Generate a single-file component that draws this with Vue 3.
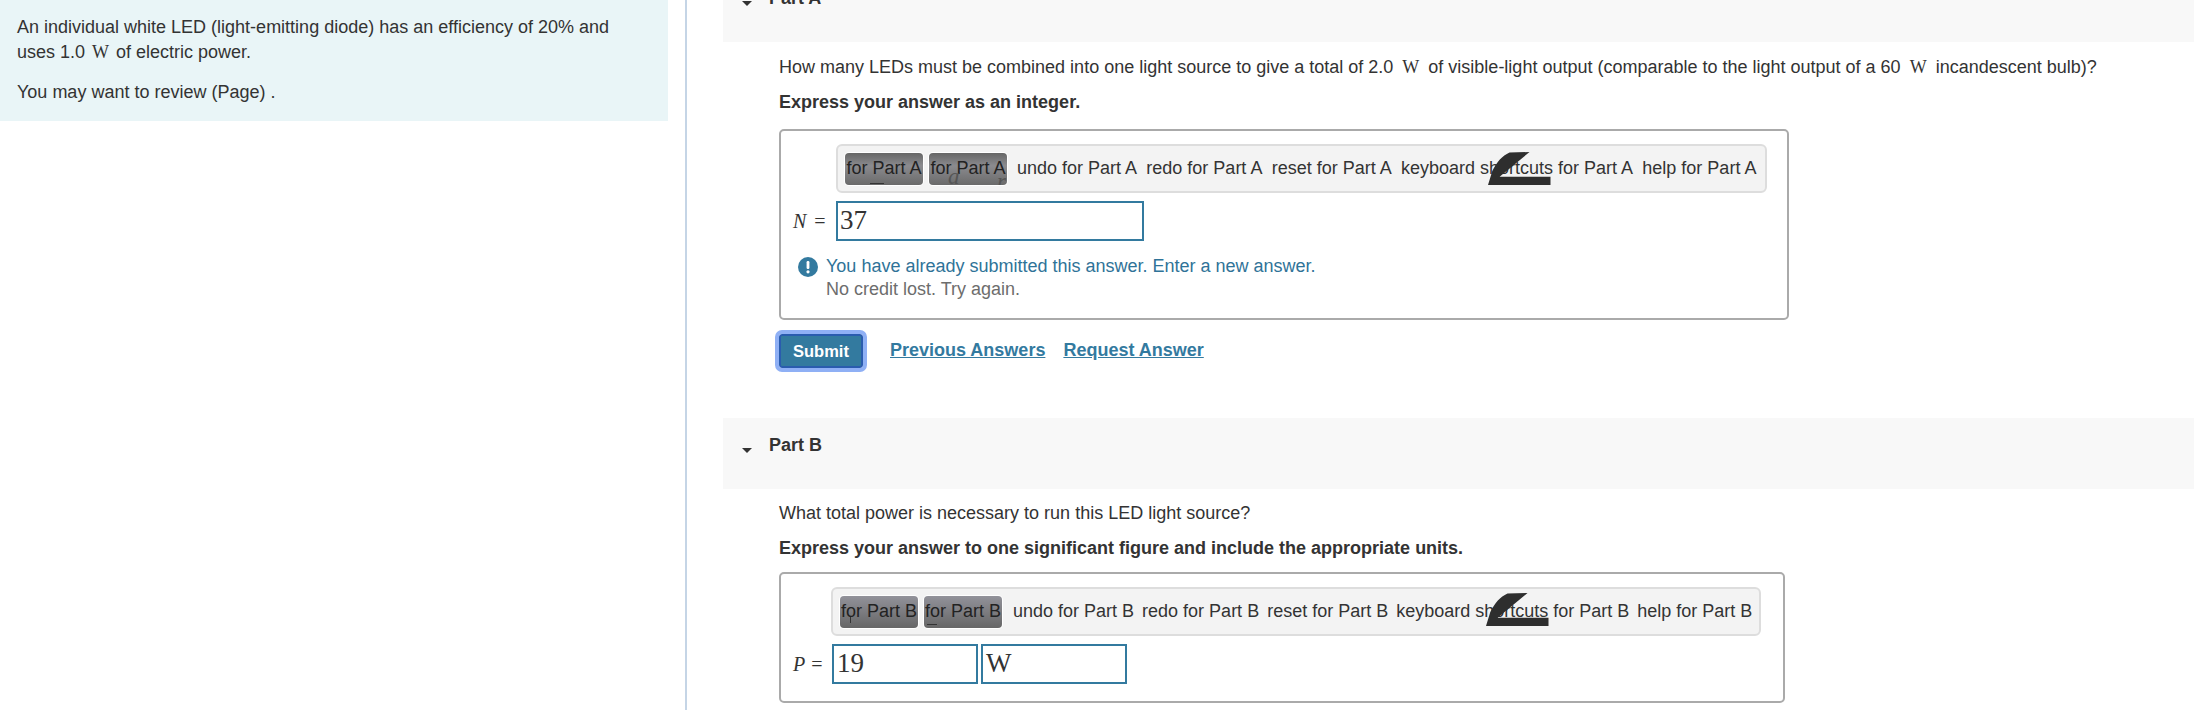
<template>
  <div class="page">
    <aside class="left">
      <div class="intro">
        <p>An individual white LED (light-emitting diode) has an efficiency of 20% and uses 1.0 <span class="unit">W</span> of electric power.</p>
        <p>You may want to review (Page) .</p>
      </div>
    </aside>

    <main class="right">
      <section v-for="part in parts" :key="part.name" class="part" :class="part.cls">
        <div class="part-head">
          <span class="caret"></span>
          <span class="part-name">Part {{ part.name }}</span>
        </div>
        <div class="part-body">
          <p class="question" v-html="part.question"></p>
          <p class="instruction">{{ part.instruction }}</p>
          <div class="answer-box">
            <div class="toolbar">
              <span class="tool-btn first">for Part {{ part.name }}<i class="mark"></i></span>
              <span class="tool-btn second">
                for Part {{ part.name }}
                <template v-if="part.name === 'A'">
                  <i class="ghost ghost-a">a</i>
                  <i class="ghost ghost-r">r</i>
                </template>
                <i v-else class="mark"></i>
              </span>
              <span v-for="t in tools" :key="t" class="tool">{{ t }} for Part {{ part.name }}</span>
              <svg class="swoosh" width="63" height="33" viewBox="0 0 63 33">
                <path d="M0 33 L4.3 19 C9 10 14 4 21.5 0.6 L41.5 0 L11.6 24.7 L62.5 24.7 L62.5 33 Z" fill="#2e2e2e" />
              </svg>
            </div>
            <div class="answer-row">
              <span class="var"><i>{{ part.variable }}</i><span class="eq">=</span></span>
              <span v-for="v in part.values" :key="v" class="field">{{ v }}</span>
            </div>
            <div v-if="part.feedback" class="feedback">
              <svg class="alert" width="20" height="20" viewBox="0 0 20 20">
                <circle cx="10" cy="10" r="10" fill="#337a9f" />
                <rect x="8.6" y="4" width="2.8" height="8" rx="1.2" fill="#fff" />
                <circle cx="10" cy="14.8" r="1.6" fill="#fff" />
              </svg>
              <div>
                <div class="feedback-main">You have already submitted this answer. Enter a new answer.</div>
                <div class="feedback-sub">No credit lost. Try again.</div>
              </div>
            </div>
          </div>
          <div v-if="part.feedback" class="actions">
            <button type="button" class="submit">Submit</button>
            <a class="link">Previous Answers</a>
            <a class="link">Request Answer</a>
          </div>
        </div>
      </section>
    </main>
  </div>
</template>

<script setup>
const tools = ['undo', 'redo', 'reset', 'keyboard shortcuts', 'help']

const parts = [
  {
    name: 'A',
    cls: 'part-a',
    question: 'How many LEDs must be combined into one light source to give a total of 2.0 <span class="unit">W</span> of visible-light output (comparable to the light output of a 60 <span class="unit">W</span> incandescent bulb)?',
    instruction: 'Express your answer as an integer.',
    variable: 'N',
    values: ['37'],
    feedback: true
  },
  {
    name: 'B',
    cls: 'part-b',
    question: 'What total power is necessary to run this LED light source?',
    instruction: 'Express your answer to one significant figure and include the appropriate units.',
    variable: 'P',
    values: ['19', 'W'],
    feedback: false
  }
]
</script>

<style>
html, body {
  margin: 0;
  overflow: hidden;
  background: #fff;
}
</style>

<style scoped>
.page {
  display: flex;
  height: 710px;
  overflow: hidden;
  font-family: "Liberation Sans", Arial, sans-serif;
  font-size: 18px;
  color: #333;
}

.left {
  width: 685px;
  flex: none;
  border-right: 2px solid #c5d5e6;
}

.intro {
  width: 668px;
  height: 121px;
  box-sizing: border-box;
  padding: 15px 17px 0;
  background: #e9f5f7;
  line-height: 25px;
}

.intro p {
  margin: 0 0 15px;
}

.intro p:last-child {
  margin: 0;
}

:deep(.unit) {
  font-family: "Liberation Serif", serif;
  margin: 0 4px;
}

.intro .unit {
  margin: 0 2px;
}

.right {
  flex: 1;
  min-width: 0;
  margin-top: -29px;
  padding-left: 36px;
}

.part-head {
  display: flex;
  align-items: center;
  height: 71px;
  padding: 0 0 17px 19px;
  box-sizing: border-box;
  background: #f8f8f8;
}

.caret {
  width: 0;
  height: 0;
  margin-top: 10px;
  border-left: 5px solid transparent;
  border-right: 5px solid transparent;
  border-top: 5px solid #333;
}

.part-name {
  margin-left: 17px;
  font-weight: bold;
}

.part-body {
  padding-left: 56px;
}

.question {
  margin: 13px 0 0;
  line-height: 24px;
}

.part-b .question {
  margin-top: 12px;
}

.instruction {
  margin: 11px 0 0;
  line-height: 24px;
  font-weight: bold;
}

.answer-box {
  box-sizing: border-box;
  margin-top: 15px;
  border: 2px solid #aaa;
  border-radius: 5px;
  background: #fff;
}

.part-a .answer-box {
  width: 1010px;
  height: 191px;
  padding: 13px 20px 0 55px;
}

.part-b .answer-box {
  width: 1006px;
  height: 131px;
  margin-top: 12px;
  padding: 13px 22px 0 50px;
}

.toolbar {
  position: relative;
  display: flex;
  align-items: center;
  height: 49px;
  box-sizing: border-box;
  padding-left: 7px;
  border: 2px solid #ddd;
  border-radius: 6px;
  background: #f3f3f3;
  white-space: nowrap;
}

.tool-btn {
  position: relative;
  overflow: hidden;
  display: flex;
  align-items: center;
  justify-content: center;
  width: 78px;
  height: 32px;
  box-sizing: border-box;
  margin-right: 6px;
  border-radius: 4px;
  box-shadow: 0 0 0 1px #fff;
  color: #222;
}

.part-a .first,
.part-a .second {
  background: linear-gradient(#666, #8b8b8f 40%, #6a6a6a);
}

.part-b .first,
.part-b .second {
  background: linear-gradient(#92929a, #666);
}

.ghost {
  position: absolute;
  font-family: "Liberation Serif", serif;
  font-size: 23px;
  line-height: 23px;
  color: #555;
}

.ghost-a {
  left: 19px;
  top: 12px;
}

.ghost-r {
  left: 68px;
  top: 17px;
}

.mark {
  position: absolute;
  bottom: 1px;
  width: 10px;
  height: 1px;
  background: #333;
}

.part-a .first .mark {
  left: 25px;
  width: 14px;
}

.part-b .first .mark {
  left: 10px;
  bottom: 5px;
  width: 1px;
  height: 6px;
}

.part-b .second .mark {
  left: 3px;
  bottom: 3px;
}

.tool {
  margin-left: 9.25px;
  color: #333;
}

.part-b .tool {
  margin-left: 8px;
}

.tool-btn + .tool {
  margin-left: 10px;
}

.part-b .tool-btn + .tool {
  margin-left: 11px;
}

.tool-btn + .tool-btn {
  margin-right: 0;
}

.swoosh {
  position: absolute;
  top: 6px;
  left: 650px;
}

.part-b .swoosh {
  left: 653px;
  top: 4px;
}

.answer-row {
  position: relative;
  display: flex;
  gap: 3px;
  margin-top: 8px;
}

.part-b .answer-row {
  margin-left: 1px;
}

.var {
  position: absolute;
  left: -43px;
  top: 0;
  line-height: 40px;
  font-family: "Liberation Serif", serif;
  font-size: 20px;
}

.eq {
  margin-left: 8px;
}

.part-b .var {
  left: -39px;
}

.part-b .eq {
  margin-left: 6px;
}

.field {
  box-sizing: border-box;
  width: 308px;
  height: 40px;
  padding-left: 2px;
  border: 2px solid #337a9f;
  font-family: "Liberation Serif", serif;
  font-size: 27px;
  line-height: 34px;
  color: #333;
}

.part-b .field {
  width: 146px;
  padding-left: 3px;
}

.feedback {
  display: flex;
  gap: 8px;
  margin: 14px 0 0 -38px;
  line-height: 23px;
}

.alert {
  flex: none;
  margin-top: 2px;
}

.feedback-main {
  color: #2f7398;
}

.feedback-sub {
  color: #6d6d6d;
}

.actions {
  display: flex;
  align-items: center;
  margin: 10px 0 0 -4px;
}

.submit {
  box-sizing: border-box;
  width: 84px;
  height: 34px;
  padding: 0;
  border: 2px solid #2a5cae;
  border-radius: 3px;
  outline: 4px solid #8fb0f5;
  outline-offset: 0;
  margin: 4px;
  background: #337a9f;
  color: #fff;
  font: bold 16.5px "Liberation Sans", Arial, sans-serif;
}

.link {
  margin: 0 0 2px 18px;
  color: #337a9f;
  font-weight: bold;
  text-decoration: underline;
}

.submit + .link {
  margin-left: 23px;
}

.part-b {
  margin-top: 46px;
}
</style>
